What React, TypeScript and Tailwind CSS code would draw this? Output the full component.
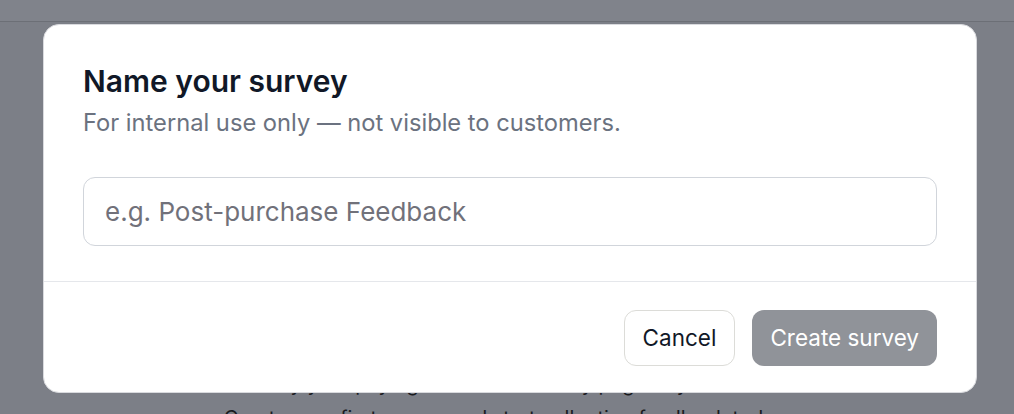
export default function App() {
  return (
    <div className="relative h-[414px] w-full overflow-hidden bg-[#7c7f87]" style={{ fontFamily: "Inter, 'Noto Sans', sans-serif" }}>
      {/* page behind the dialog */}
      <div className="h-[22px] border-b border-[#6c6f76] bg-[#80838b]" />
      <div className="flex flex-col items-center pt-[350px] text-[20px] leading-[24px] text-[#1a1b1f]">
        <p>Survey your paying customers on any page of your store.</p>
        <p className="mt-[10px]">Create your first survey and start collecting feedback today.</p>
      </div>

      {/* dialog */}
      <div className="absolute left-[43px] top-[24px] w-[934px] rounded-[16px] border border-[#d9dade] bg-white">
        <div className="px-[39px] pb-[35px] pt-[38px]">
          <h2 className="text-[30px] font-semibold leading-[36px] text-[#111827]">Name your survey</h2>
          <p className="mt-[9px] text-[23.7px] leading-[30px] text-[#6b7280]">
            For internal use only — not visible to customers.
          </p>
          <input
            type="text"
            placeholder="e.g. Post-purchase Feedback"
            className="mt-[39px] h-[69px] w-full rounded-[12px] border border-[#d1d5db] px-[21px] text-[26px] text-[#111827] outline-none placeholder:text-[#71717a]"
          />
        </div>
        <div className="flex justify-end gap-[17px] border-t border-[#e5e7eb] px-[39px] pb-[26px] pt-[28px]">
          <button className="h-[56px] rounded-[12px] border border-[#dcdcd8] bg-white px-[18px] text-[22.5px] text-[#111827]">
            Cancel
          </button>
          <button disabled className="h-[56px] rounded-[12px] bg-[#909399] px-[18px] text-[22.5px] text-white">
            Create survey
          </button>
        </div>
      </div>
    </div>
  );
}
